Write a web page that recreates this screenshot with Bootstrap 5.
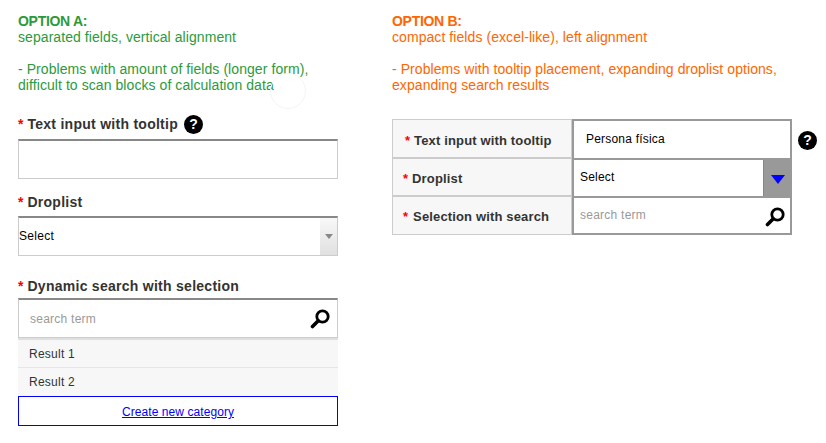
<!DOCTYPE html>
<html lang="en">
<head>
<meta charset="utf-8">
<title>Options</title>
<link href="https://cdn.jsdelivr.net/npm/bootstrap@5.3.0/dist/css/bootstrap.min.css" rel="stylesheet">
<style>
html,body{height:443px;overflow:hidden;background:#fff}
body{font-family:"Liberation Sans",Arial,sans-serif;font-size:14px;line-height:16px;color:#333;position:relative}
.page{padding-top:13px}
.opt-a{width:320px;margin-left:18px;margin-right:54px}
.opt-b{width:434px}
.intro{height:80px;margin:0;letter-spacing:.07px}
.intro-a{color:#2c9a3c}
.intro-b{color:#f60}
.ttl{font-weight:700;letter-spacing:-.3px}
.fld-label{font-weight:700;font-size:14px;line-height:16px;letter-spacing:.27px;margin:0 0 6px;color:#333;display:flex;align-items:center}
.req{color:#f00;margin-right:4px;font-weight:700;letter-spacing:0}
.help{width:19px;height:19px;border-radius:50%;background:#000;color:#fff;font-weight:700;font-size:14px;line-height:19px;text-align:center;flex:none;letter-spacing:0}
.box{height:40px;border:1px solid #ccc;border-top:2px solid #888;background:#fff;border-radius:0}
input.box{display:block;width:100%;box-shadow:none;outline:0}
.first-lab{margin-top:22px;height:18px;margin-bottom:6px}
.sec-lab{margin-top:15px;margin-bottom:6px}
.sec-lab-c{margin-top:22px;margin-bottom:4px}
.sel{font-size:12px;color:#000;letter-spacing:.3px}
.sel>span:first-child{position:relative;top:-1px}
.sel-btn{width:17px;height:100%;background:linear-gradient(#f8f8f8,#e0e0e0)}
.tri{width:0;height:0;border-left:4px solid transparent;border-right:4px solid transparent;border-top:5px solid #888}
.srch{padding-left:11px;padding-right:7px}
.res{height:29px;background:#f7f7f7;border-top:1px solid #e6e6e6;font-size:12px;line-height:29px;padding-left:11px;color:#333;letter-spacing:.25px}
.res-first{border-top:2px solid #e0e0e0}
.create{height:30px;border:1px solid #00f;font-size:12px;line-height:30px;text-align:center;letter-spacing:.07px}
.create a{color:#00f}
.grid-b{width:400px;margin-top:26px}
.rw{height:38px}
.rw-top{height:39px}
.rw-end{height:39px}
.cell-l{width:180px;background:#f7f7f7;border:1px solid #ccc;font-weight:700;font-size:13px;letter-spacing:.15px;padding-top:4px;color:#333}
.ind-a{padding-left:12px}
.ind-b{padding-left:10px}
.ind-c{padding-left:10px;padding-top:2px}
.ind-c .req{margin-right:5px}
.cell-r{width:220px;background:#fff;border:2px solid #999;border-bottom:0;font-size:12px;color:#000;letter-spacing:.2px}
.rw-end .cell-r{border-bottom:2px solid #999}
.pad-t{padding-left:12px}
.pad-s{padding-left:6px}
.lift{position:relative;top:-1px}
.blue-btn{width:29px;height:100%;background:#999;margin-right:-2px;border-left:1px solid #888}
.tri-b{border-left:7px solid transparent;border-right:7px solid transparent;border-top:9px solid #00f;width:0;height:0;margin-top:3px}
.fld-gap{margin-left:6px}
.help-b{margin:38px 0 0 6px}
.ghost{position:absolute;left:270px;top:73px;width:36px;height:36px;border-radius:50%;border:1px solid #f5f5f5;pointer-events:none}
input.srch-in{border:0;outline:0;padding:0;background:transparent;font-size:12px;color:#999;flex:1;min-width:0;letter-spacing:.25px}
input.srch-in::placeholder{color:#999;opacity:1}
.ph{color:#999;letter-spacing:.25px}
.ic-b{margin-right:5px;margin-top:2px}
</style>
</head>
<body>
<div class="page d-flex">
  <section class="opt-a">
    <p class="intro intro-a"><span class="ttl">OPTION A:</span><br>separated fields, vertical alignment<br><br>- Problems with amount of fields (longer form),<br>difficult to scan blocks of calculation data</p>
    <label class="fld-label first-lab"><span class="req">*</span>Text input with tooltip<span class="help fld-gap">?</span></label>
    <input class="box" type="text" aria-label="Text input with tooltip">
    <div class="fld-label sec-lab"><span class="req">*</span>Droplist</div>
    <div class="box sel d-flex align-items-center justify-content-between">
      <span>Select</span>
      <span class="sel-btn d-flex align-items-center justify-content-center"><span class="tri"></span></span>
    </div>
    <div class="fld-label sec-lab-c"><span class="req">*</span>Dynamic search with selection</div>
    <div class="box srch d-flex align-items-center justify-content-between">
      <input class="srch-in" type="text" placeholder="search term" aria-label="search term">
      <svg width="20" height="20" viewBox="0 0 20 20" aria-hidden="true"><circle cx="12.5" cy="7.5" r="5.7" fill="none" stroke="#000" stroke-width="2.8"/><path d="M8 12 2.5 17.5" stroke="#000" stroke-width="3.6" stroke-linecap="round"/></svg>
    </div>
    <div class="res res-first">Result 1</div>
    <div class="res">Result 2</div>
    <div class="create"><a href="#">Create new category</a></div>
  </section>
  <section class="opt-b">
    <p class="intro intro-b"><span class="ttl">OPTION B:</span><br>compact fields (excel-like), left alignment<br><br>- Problems with tooltip placement, expanding droplist options,<br>expanding search results</p>
    <div class="d-flex align-items-start">
      <div class="grid-b">
        <div class="rw rw-top d-flex">
          <div class="cell-l ind-a d-flex align-items-center"><span class="req">*</span>Text input with tooltip</div>
          <div class="cell-r pad-t d-flex align-items-center"><span class="lift">Persona física</span></div>
        </div>
        <div class="rw d-flex">
          <div class="cell-l ind-b d-flex align-items-center"><span class="req">*</span>Droplist</div>
          <div class="cell-r pad-s d-flex align-items-center justify-content-between"><span class="lift">Select</span><span class="blue-btn d-flex align-items-center justify-content-center"><span class="tri-b"></span></span></div>
        </div>
        <div class="rw rw-end d-flex">
          <div class="cell-l ind-c d-flex align-items-center"><span class="req">*</span>Selection with search</div>
          <div class="cell-r pad-s d-flex align-items-center justify-content-between"><span class="ph lift">search term</span>
            <svg class="ic-b" width="20" height="20" viewBox="0 0 20 20" aria-hidden="true"><circle cx="12.5" cy="7.5" r="5.7" fill="none" stroke="#000" stroke-width="2.8"/><path d="M8 12 2.5 17.5" stroke="#000" stroke-width="3.6" stroke-linecap="round"/></svg>
          </div>
        </div>
      </div>
      <span class="help help-b">?</span>
    </div>
  </section>
</div>
<div class="ghost"></div>
<script src="https://cdn.jsdelivr.net/npm/bootstrap@5.3.0/dist/js/bootstrap.bundle.min.js"></script>
</body>
</html>
